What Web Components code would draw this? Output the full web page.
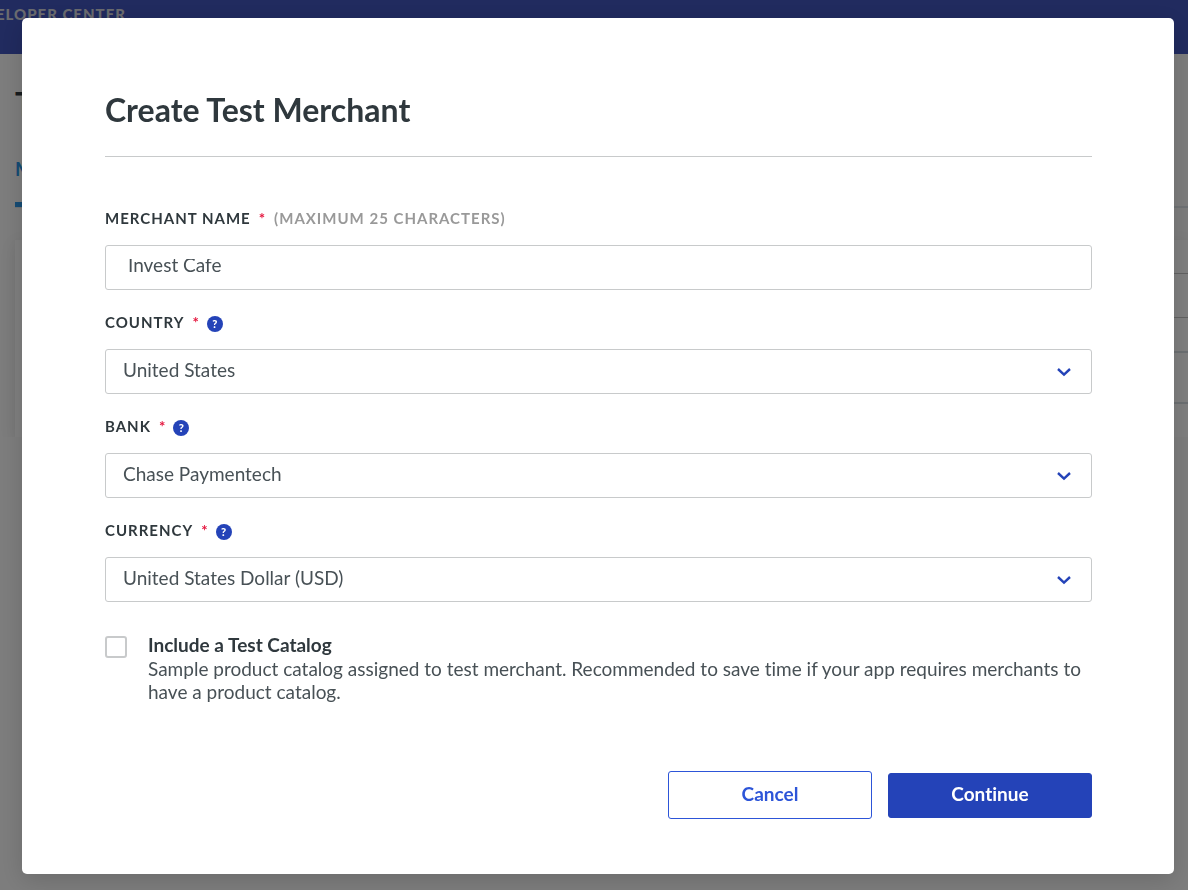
<!DOCTYPE html>
<html lang="en">
<head>
<meta charset="utf-8">
<title>Create Test Merchant</title>
<style>
  body { margin: 0; background: #fafafa; color: #2f383d; font-family: Lato, "Open Sans", sans-serif; font-size: 19px; font-variant-ligatures: none; }
</style>
</head>
<body>
<dev-page></dev-page>
<modal-dialog heading="Create Test Merchant">
  <form-field label="Merchant Name" hint="(Maximum 25 Characters)" value="Invest Cafe"></form-field>
  <form-field label="Country" kind="select" value="United States"></form-field>
  <form-field label="Bank" kind="select" value="Chase Paymentech"></form-field>
  <form-field label="Currency" kind="select" value="United States Dollar (USD)"></form-field>
  <check-option heading="Include a Test Catalog">Sample product catalog assigned to test merchant. Recommended to save time if your app requires merchants to have a product catalog.</check-option>
  <action-button slot="actions" variant="outline">Cancel</action-button>
  <action-button slot="actions" variant="solid">Continue</action-button>
</modal-dialog>
<script>
class DevPage extends HTMLElement {
  connectedCallback() {
    this.attachShadow({ mode: "open" }).innerHTML = `
      <style>
        :host { display: block; overflow: hidden; }
        header { height: 54px; background: #4256be; }
        .brand { width: 126px; height: 28px; display: flex; justify-content: flex-end;
          font-size: 15px; font-weight: 900; line-height: 28px; letter-spacing: 1px; color: #d4d6df; white-space: nowrap; }
        main { padding: 0 0 0 15px; }
        h1 { margin: 0; padding-top: 30px; font-size: 32px; line-height: 40px; font-weight: 700; }
        .tabs { margin-top: 28px; height: 54px; border-bottom: 2px solid #dfe5ea; }
        .tabs span { display: inline-block; height: 50px; line-height: 34px; color: #2a96e8; font-weight: 700; border-bottom: 5px solid #2a96e8; }
        .card { margin-top: 32px; background: #fff; box-shadow: 0 4px 16px rgba(0,0,0,.08); padding: 33px 0 0 16px; }
        .row { box-sizing: border-box; border-top: 1px solid #c4c4c4; height: 44px; }
        .row.short { height: 34px; }
        .row.tall { height: 51px; border-top: 2px solid #d8dfe4; }
        .row.last { height: 35px; border-top: 2px solid #d8dfe4; }
      </style>
      <header><div class="brand">DEVELOPER CENTER</div></header>
      <main>
        <h1>T</h1>
        <div class="tabs"><span>M</span></div>
        <div class="card"><div class="row"></div><div class="row short"></div><div class="row tall"></div><div class="row last"></div></div>
      </main>`;
  }
}
class ModalDialog extends HTMLElement {
  connectedCallback() {
    this.attachShadow({ mode: "open" }).innerHTML = `
      <style>
        :host { display: block; position: fixed; inset: 0; overflow: auto; box-sizing: border-box;
          padding: 18px 14px 16px 22px; background: rgba(0,0,0,.5); }
        section { background: #fff; border-radius: 5px; padding: 74px 82px 55px 83px; box-shadow: 0 6px 24px rgba(0,0,0,.15); }
        h2 { margin: 0 0 51px; padding-bottom: 28px; border-bottom: 1px solid #c8cacb; font-size: 32px; line-height: 36px; font-weight: 700; }
        footer { display: flex; justify-content: flex-end; align-items: center; gap: 16px; margin-top: 68px; }
      </style>
      <section role="dialog" aria-labelledby="t">
        <h2 id="t">${this.getAttribute("heading")}</h2>
        <slot></slot>
        <footer><slot name="actions"></slot></footer>
      </section>`;
  }
}
class HelpTip extends HTMLElement {
  connectedCallback() {
    this.attachShadow({ mode: "open" }).innerHTML = `
      <style>
        :host { display: block; margin: 4px 0 0 7px; }
        button { display: block; width: 16px; height: 16px; padding: 0; border: 0; border-radius: 50%; background: #2443b8;
          color: #fff; font: 900 11px/16px Lato, sans-serif; text-align: center; }
      </style>
      <button type="button" aria-label="Help">?</button>`;
  }
}
class FormField extends HTMLElement {
  connectedCallback() {
    const a = n => this.getAttribute(n) || "";
    const isSelect = a("kind") === "select";
    const hint = a("hint") ? `<span class="hint">${a("hint")}</span>` : "";
    const control = isSelect
      ? `<select id="c"><option>${a("value")}</option></select>
         <svg width="16" height="10" viewBox="0 0 16 10" aria-hidden="true"><path d="M2 2l6 5.6L14 2" fill="none" stroke="#2443b8" stroke-width="2.4"/></svg>`
      : `<input id="c" type="text" maxlength="25" value="${a("value")}">`;
    this.attachShadow({ mode: "open" }).innerHTML = `
      <style>
        :host { display: block; margin-bottom: 22px; }
        .head { display: flex; height: 20px; margin-bottom: 17px; }
        label { font-size: 15px; line-height: 20px; font-weight: 700; letter-spacing: 1px; text-transform: uppercase; white-space: pre; }
        i { font-style: normal; color: #e5173f; margin-left: 8px; }
        .hint { color: #999; margin-left: 8px; }
        .box { display: grid; align-items: center; height: 43px; border: 1px solid #c8cacb; border-radius: 3px; background: #fff; }
        .box > * { grid-area: 1 / 1; }
        select, input { appearance: none; box-sizing: border-box; width: 100%; height: 43px; margin: 0; border: 0; outline: 0;
          background: transparent; color: #485156; font: 400 19px/24px Lato, sans-serif; padding: 0 40px 4px 17px; }
        input { padding: 0 22px 6px; clip-path: inset(13px 0 0); }
        svg { justify-self: end; margin-right: 19px; pointer-events: none; }
      </style>
      <div class="head"><label for="c">${a("label")}<i>*</i>${hint}</label>${isSelect ? "<help-tip></help-tip>" : ""}</div>
      <div class="box">${control}</div>`;
  }
}
class CheckOption extends HTMLElement {
  connectedCallback() {
    this.attachShadow({ mode: "open" }).innerHTML = `
      <style>
        :host { display: block; margin-top: 31px; }
        label { display: grid; grid-template-columns: 22px 1fr; column-gap: 21px; }
        input { appearance: none; box-sizing: border-box; width: 22px; height: 22px; margin: 3px 0 0; border: 2px solid #c8cacb; border-radius: 3px; background: #fff; }
        strong { display: block; line-height: 24px; font-weight: 700; }
        p { margin: 0; line-height: 23px; color: #485156; }
      </style>
      <label><input type="checkbox"><div><strong>${this.getAttribute("heading")}</strong><p><slot></slot></p></div></label>`;
  }
}
class ActionButton extends HTMLElement {
  connectedCallback() {
    const solid = this.getAttribute("variant") === "solid";
    this.attachShadow({ mode: "open" }).innerHTML = `
      <style>
        :host { display: block; }
        button { display: block; box-sizing: border-box; width: 204px; height: 48px; padding: 0 0 3px; border: 1px solid #2d55d8; border-radius: 3px;
          background: #fff; color: #2d55d8; font: 700 19px/24px Lato, sans-serif; font-variant-ligatures: none; }
        .solid { height: 45px; border-color: #2443b8; background: #2443b8; color: #fff; }
      </style>
      <button type="button" class="${solid ? "solid" : ""}"><slot></slot></button>`;
  }
}
customElements.define("dev-page", DevPage);
customElements.define("modal-dialog", ModalDialog);
customElements.define("help-tip", HelpTip);
customElements.define("form-field", FormField);
customElements.define("check-option", CheckOption);
customElements.define("action-button", ActionButton);
</script>
</body>
</html>
